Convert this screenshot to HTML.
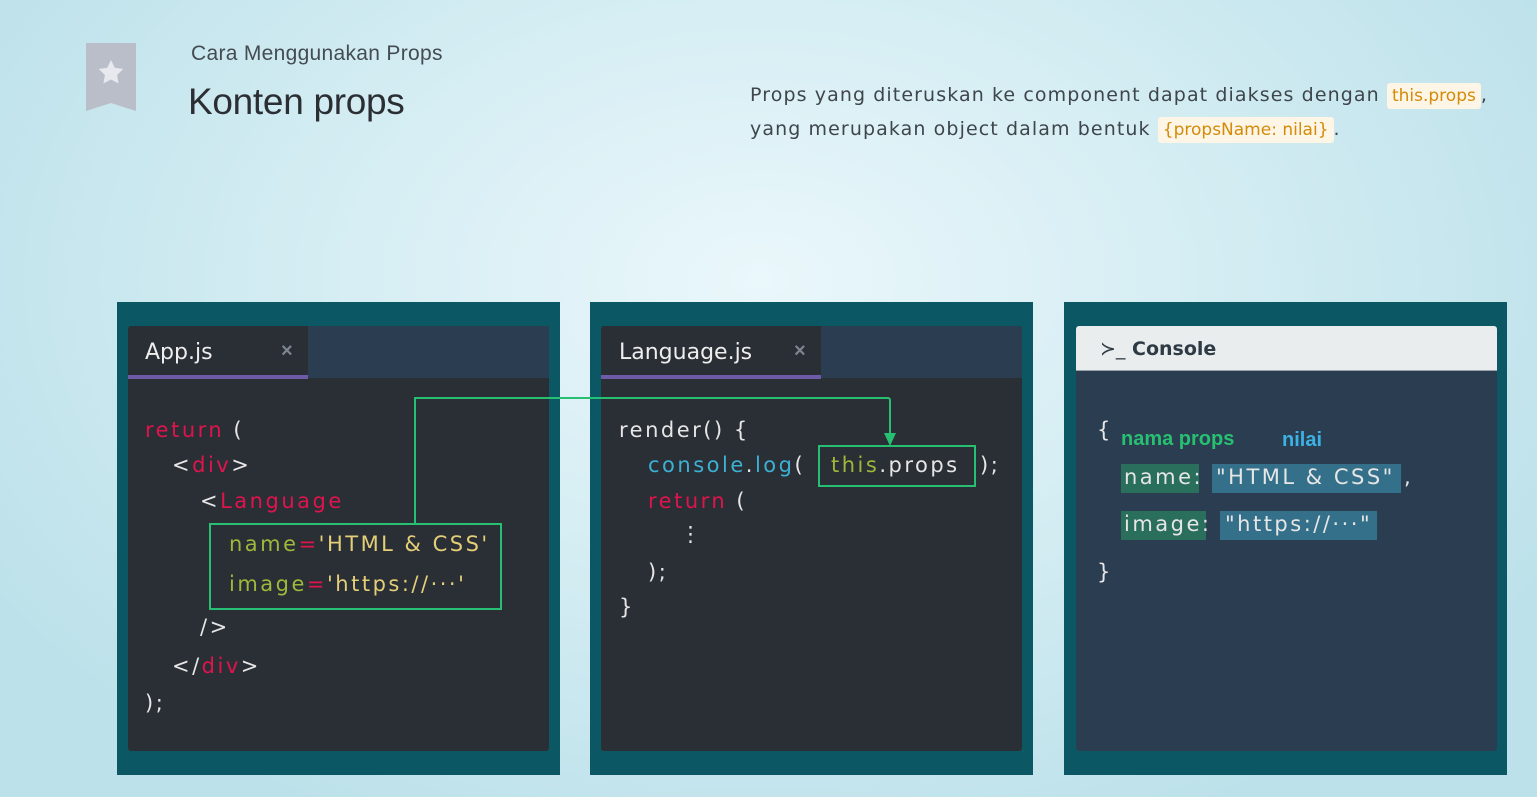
<!DOCTYPE html>
<html><head><meta charset="utf-8"><style>
*{margin:0;padding:0;box-sizing:border-box}
body{width:1537px;height:797px;overflow:hidden;position:relative;font-family:"Liberation Sans","DejaVu Sans",sans-serif;
background:radial-gradient(ellipse 900px 600px at 760px 280px,#eaf7fb 0%,#d4edf3 50%,#bde1ea 100%);}
.a{position:absolute}
.code{font-family:"DejaVu Sans",sans-serif;font-size:21px;letter-spacing:2.5px;color:#e6e6e6;white-space:pre;font-weight:normal}
.outer{background:#0b5864}
.r{color:#e0144c}.y{color:#e4cf78}.g{color:#9fb83a}.b{color:#3cb1d4}
</style></head><body>
<svg class="a" style="left:86px;top:43px" width="50" height="70" viewBox="0 0 50 70">
<path d="M0 0H50V68L25 60L0 68Z" fill="#b9bec8"/>
<path d="M25 17l3.8 7.8 8.5 1.2-6.2 6 1.5 8.5L25 36.5l-7.6 4 1.5-8.5-6.2-6 8.5-1.2z" fill="#e7e9ee"/>
</svg>
<div class="a" style="left:191px;top:42px;font-size:21px;color:#444c52;letter-spacing:0.3px">Cara Menggunakan Props</div>
<div class="a" style="left:188px;top:81px;font-size:37px;color:#2b2f33;letter-spacing:-0.3px">Konten props</div>
<div class="a" style="left:750px;top:79px;font-family:'DejaVu Sans',sans-serif;font-size:19px;color:#3e454b;line-height:33px;letter-spacing:1.1px">Props yang diteruskan ke component dapat diakses dengan <span style="background:#fdf6e6;color:#d58a08;font-size:17px;padding:3px 5px;border-radius:3px;letter-spacing:0">this.props</span>,<br>yang merupakan object dalam bentuk <span style="background:#fdf6e6;color:#d58a08;font-size:17px;padding:3px 5px;border-radius:3px;letter-spacing:0">{propsName: nilai}</span>.</div>

<div class="a outer" style="left:117px;top:302px;width:443px;height:473px"></div>
<div class="a" style="left:128px;top:326px;width:421px;height:425px;background:#2a2e35;border-radius:3px"></div>
<div class="a" style="left:308px;top:326px;width:241px;height:52px;background:#2b3d50"></div>
<div class="a" style="left:128px;top:375px;width:180px;height:4px;background:#6f5aa8"></div>
<div class="a" style="left:145px;top:340px;font-size:22px;color:#eee;font-family:'DejaVu Sans',sans-serif">App.js</div>
<div class="a" style="left:281px;top:340px;font-size:20px;color:#7c8590;font-weight:bold">×</div>
<div class="a code" style="left:145px;top:418px"><span class="r">return</span> (</div>
<div class="a code" style="left:172px;top:453px">&lt;<span class="r">div</span>&gt;</div>
<div class="a code" style="left:200px;top:489px">&lt;<span class="r">Language</span></div>
<div class="a code" style="left:229px;top:532px"><span class="g">name</span><span class="r">=</span><span class="y">'HTML &amp; CSS'</span></div>
<div class="a code" style="left:229px;top:572px"><span class="g">image</span><span class="r">=</span><span class="y">'https://···'</span></div>
<div class="a code" style="left:200px;top:615px">/&gt;</div>
<div class="a code" style="left:172px;top:654px">&lt;/<span class="r">div</span>&gt;</div>
<div class="a code" style="left:145px;top:691px">);</div>

<div class="a outer" style="left:590px;top:302px;width:443px;height:473px"></div>
<div class="a" style="left:601px;top:326px;width:421px;height:425px;background:#2a2e35;border-radius:3px"></div>
<div class="a" style="left:821px;top:326px;width:201px;height:52px;background:#2b3d50"></div>
<div class="a" style="left:601px;top:375px;width:220px;height:4px;background:#6f5aa8"></div>
<div class="a" style="left:619px;top:340px;font-size:22px;color:#eee;font-family:'DejaVu Sans',sans-serif">Language.js</div>
<div class="a" style="left:794px;top:340px;font-size:20px;color:#7c8590;font-weight:bold">×</div>
<div class="a code" style="left:619px;top:418px">render() {</div>
<div class="a code" style="left:648px;top:453px"><span class="b">console</span>.<span class="b">log</span>(</div>
<div class="a code" style="left:831px;top:453px"><span class="g">this</span>.props</div>
<div class="a code" style="left:980px;top:453px">);</div>
<div class="a code" style="left:680px;top:522px">⋮</div>
<div class="a code" style="left:648px;top:489px"><span class="r">return</span> (</div>
<div class="a code" style="left:648px;top:560px">);</div>
<div class="a code" style="left:619px;top:595px">}</div>

<svg class="a" style="left:0;top:0" width="1537" height="797">
<g fill="none" stroke="#27c072" stroke-width="2">
<rect x="210" y="524" width="291" height="85"/>
<rect x="819" y="446" width="156" height="40"/>
<path d="M415 524V398H888a2 2 0 0 1 2 2V436"/>
</g>
<path d="M884 433h12l-6 13z" fill="#27c072"/>
</svg>

<div class="a outer" style="left:1064px;top:302px;width:443px;height:473px"></div>
<div class="a" style="left:1076px;top:326px;width:421px;height:425px;background:#2b3d50;border-radius:3px"></div>
<div class="a" style="left:1076px;top:326px;width:421px;height:45px;background:#e9edee;border-radius:3px 3px 0 0;border-bottom:1px solid #9aa3aa"></div>
<div class="a" style="left:1100px;top:338px;font-size:19px;color:#2e3a44;font-weight:bold;font-family:'DejaVu Sans',sans-serif"><span style="font-weight:normal">≻_</span> Console</div>
<div class="a code" style="left:1097px;top:418px">{</div>
<div class="a" style="left:1121px;top:428px;font-size:20px;color:#27c072;font-weight:bold">nama props</div>
<div class="a" style="left:1282px;top:429px;font-size:20px;color:#3cb1e4;font-weight:bold">nilai</div>
<div class="a" style="left:1121px;top:464px;width:78px;height:29px;background:#2a6e5c"></div>
<div class="a" style="left:1212px;top:464px;width:189px;height:29px;background:#35708a"></div>
<div class="a" style="left:1121px;top:511px;width:85px;height:29px;background:#2a6e5c"></div>
<div class="a" style="left:1220px;top:511px;width:157px;height:29px;background:#35708a"></div>
<div class="a code" style="left:1124px;top:465px">name:</div>
<div class="a code" style="left:1216px;top:465px">"HTML &amp; CSS"</div>
<div class="a code" style="left:1404px;top:465px">,</div>
<div class="a code" style="left:1124px;top:512px">image:</div>
<div class="a code" style="left:1225px;top:512px">"https://···"</div>
<div class="a code" style="left:1097px;top:560px">}</div>
</body></html>
